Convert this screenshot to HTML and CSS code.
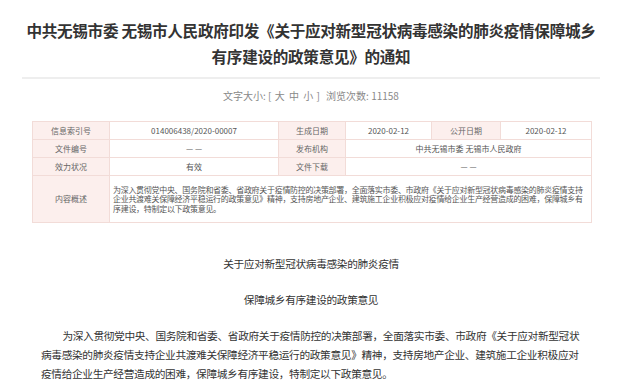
FILE: index.html
```html
<!DOCTYPE html>
<html lang="zh-CN">
<head>
  <meta charset="UTF-8">
  <title>中共无锡市委 无锡市人民政府印发《关于应对新型冠状病毒感染的肺炎疫情保障城乡有序建设的政策意见》的通知</title>
  <link rel="stylesheet" href="styles.css">
</head>
<body>
  <div class="article">
    <h1 class="title">中共无锡市委 无锡市人民政府印发《关于应对新型冠状病毒感染的肺炎疫情保障城乡有序建设的政策意见》的通知</h1>

    <div class="meta">
      文字大小: [ <span class="size">大</span> <span class="size">中</span> <span class="size">小</span> ]
      <span class="views">浏览次数: 11158</span>
    </div>

    <!-- 信息公开表 -->
    <table class="info">
      <colgroup>
        <col class="c-label">
        <col class="c-wide">
        <col class="c-label">
        <col class="c-date">
        <col class="c-label2">
        <col class="c-date2">
      </colgroup>
      <tr>
        <th>信息索引号</th>
        <td>014006438/2020-00007</td>
        <th>生成日期</th>
        <td>2020-02-12</td>
        <th>公开日期</th>
        <td>2020-02-12</td>
      </tr>
      <tr>
        <th>文件编号</th>
        <td>— —</td>
        <th>发布机构</th>
        <td colspan="3">中共无锡市委 无锡市人民政府</td>
      </tr>
      <tr>
        <th>效力状况</th>
        <td>有效</td>
        <th>文件下载</th>
        <td colspan="3">— —</td>
      </tr>
      <tr class="summary">
        <th>内容概述</th>
        <td colspan="5">为深入贯彻党中央、国务院和省委、省政府关于疫情防控的决策部署，全面落实市委、市政府《关于应对新型冠状病毒感染的肺炎疫情支持企业共渡难关保障经济平稳运行的政策意见》精神，支持房地产企业、建筑施工企业积极应对疫情给企业生产经营造成的困难，保障城乡有序建设，特制定以下政策意见。</td>
      </tr>
    </table>

    <div class="content">
      <p class="center first">关于应对新型冠状病毒感染的肺炎疫情</p>
      <p class="center">保障城乡有序建设的政策意见</p>
      <p class="para">为深入贯彻党中央、国务院和省委、省政府关于疫情防控的决策部署，全面落实市委、市政府《关于应对新型冠状病毒感染的肺炎疫情支持企业共渡难关保障经济平稳运行的政策意见》精神，支持房地产企业、建筑施工企业积极应对疫情给企业生产经营造成的困难，保障城乡有序建设，特制定以下政策意见。</p>
    </div>
  </div>
</body>
</html>
```

FILE: styles.css
```css
body {
  margin: 0;
  background: #fff;
  font-family: "Noto Sans CJK SC", "Noto Sans", sans-serif;
  color: #333;
}

.article {
  width: 578px;
  margin: 0 0 0 22px;
}

.title {
  margin: 0;
  padding: 17px 0 8px;
  font-size: 15.6px;
  letter-spacing: -0.3px;
  line-height: 26px;
  font-weight: bold;
  color: #333;
  text-align: center;
  border-bottom: 2px solid #eeeeee;
}

.meta {
  margin-top: 9px;
  font-size: 10px;
  line-height: 16px;
  color: #888;
  text-align: center;
}
.meta .size {
  margin: 0 1px;
}
.meta .views {
  margin-left: 4px;
}

/* 信息公开表 */
.info {
  width: 559px;
  margin: 17px 10px 0;
  border-collapse: collapse;
  table-layout: fixed;
  font-size: 8px;
  line-height: 10px;
}
.c-label { width: 77px; }
.c-wide { width: 169px; }
.info col:nth-child(3) { width: 67px; }
.c-date { width: 86px; }
.c-label2 { width: 69px; }
.c-date2 { width: 91px; }

.info th,
.info td {
  height: 17px;
  padding: 0 3px;
  border: 1px solid #f2dcd8;
  text-align: center;
  font-weight: normal;
  color: #555;
}
.info th {
  background: #fcefed;
  color: #666;
}
.info .summary td {
  height: 38px;
  padding: 4px 1px 4px 3px;
  text-align: left;
  letter-spacing: -0.3px;
  line-height: 9.6px;
}

.content {
  margin-top: 31px;
  font-size: 10.7px;
  letter-spacing: -0.35px;
  line-height: 19px;
  color: #333;
}
.content p {
  margin: 17px 0 0;
}
.content .first {
  margin-top: 0;
}
.center {
  text-align: center;
}
.para {
  padding: 0 20px 0 19px;
  text-indent: 2em;
}
```
